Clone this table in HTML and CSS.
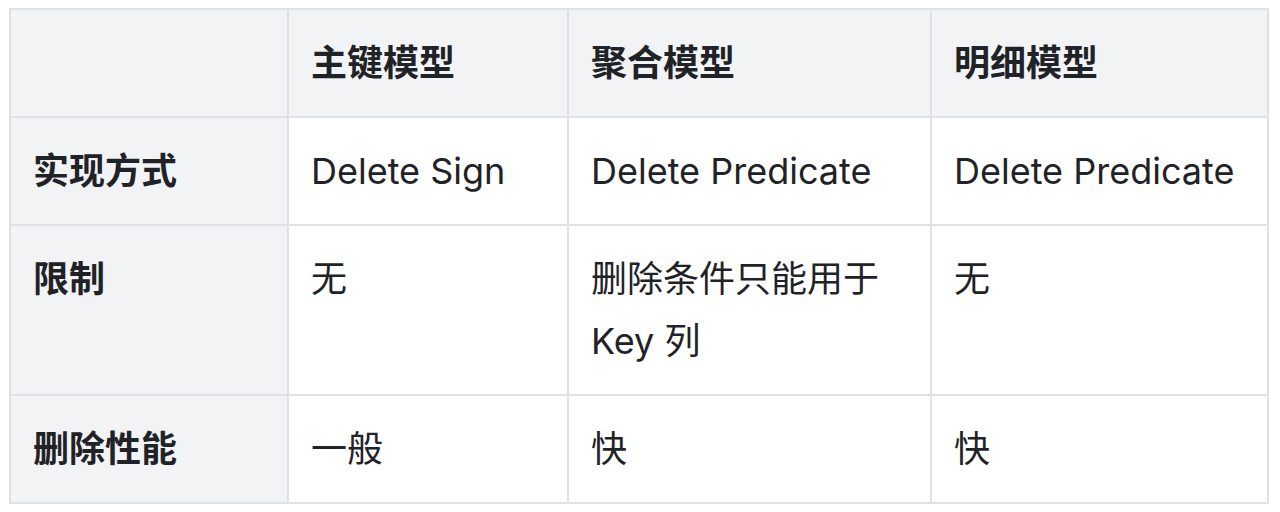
FILE: index.html
```html
<!DOCTYPE html>
<html lang="zh-CN">
<head>
<meta charset="utf-8">
<link rel="stylesheet" href="styles.css">
</head>
<body>
<table class="cmp">
  <colgroup>
    <col class="c1"><col class="c2"><col class="c3"><col class="c4">
  </colgroup>
  <thead>
    <tr>
      <th></th>
      <th>主键模型</th>
      <th>聚合模型</th>
      <th>明细模型</th>
    </tr>
  </thead>
  <tbody>
    <tr>
      <th>实现方式</th>
      <td>Delete Sign</td>
      <td>Delete Predicate</td>
      <td>Delete Predicate</td>
    </tr>
    <tr>
      <th>限制</th>
      <td>无</td>
      <td>删除条件只能用于 Key 列</td>
      <td>无</td>
    </tr>
    <tr>
      <th>删除性能</th>
      <td>一般</td>
      <td>快</td>
      <td>快</td>
    </tr>
  </tbody>
</table>
</body>
</html>
```

FILE: styles.css
```css
html, body {
  margin: 0;
  background: #ffffff;
}
body {
  padding: 8px 0 0 9px;
  font-family: "Inter", "Noto Sans CJK SC", sans-serif;
  color: #1f2328;
}
.cmp {
  border-collapse: collapse;
  table-layout: fixed;
  width: 1258px;
  font-size: 36px;
  line-height: 62px;
}
.c1 { width: 278px; }
.c2 { width: 280px; }
.c3 { width: 363px; }
.c4 { width: 337px; }
.cmp th,
.cmp td {
  border: 2px solid #dfe1e4;
  padding: 22px 22px;
  text-align: left;
  vertical-align: top;
}
.cmp th {
  background: #f2f3f5;
  font-weight: 600;
}
.cmp td {
  background: #ffffff;
  font-weight: 400;
}
```
